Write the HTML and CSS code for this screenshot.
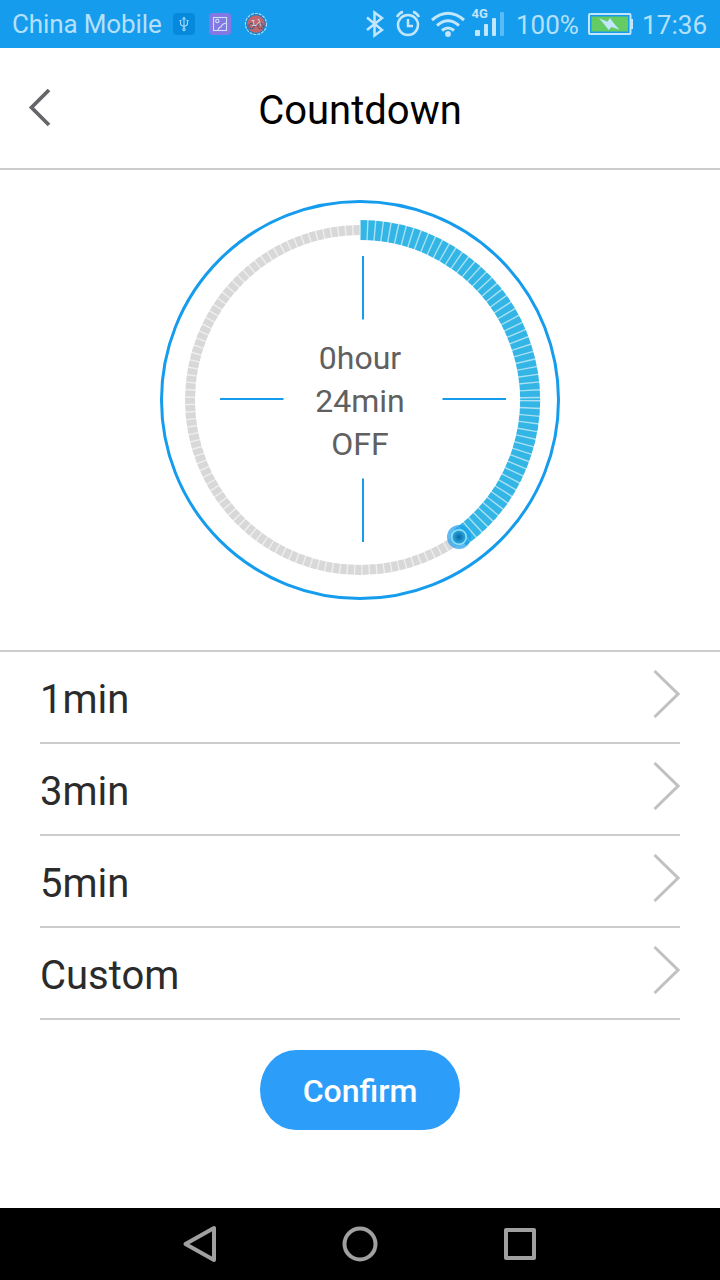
FILE: index.html
```html
<!DOCTYPE html>
<html lang="en">

<head>
    <meta charset="utf-8">
    <title>Countdown</title>
    <link rel="stylesheet" href="styles.css">
</head>

<body class="body">
    <div class="statusBar">
        <span class="carrier">China Mobile</span>
        <svg class="appIcons" width="96" height="24" viewBox="0 0 96 24">
            <!-- usb -->
            <rect x="1" y="1" width="22" height="22" rx="4" fill="#0589dd" />
            <g fill="none" stroke="#a5dafa" stroke-width="1.1">
                <path d="M12 6v11M8.500 8v3.500q0 2 3.500 3q3.500-1 3.500-3V8" />
                <circle cx="12" cy="17.500" r="1.100" />
                <path d="M10.500 7.500L12 5.500l1.500 2M7.500 8.500h2M14.500 8.500h2" />
            </g>
            <!-- picture -->
            <rect x="37" y="1" width="22" height="22" rx="4" fill="#8578e4" />
            <g fill="none" stroke="#c9e2fb" stroke-width="1.100">
                <rect x="41.500" y="5.500" width="13" height="13" />
                <circle cx="45.300" cy="9" r="1.700" />
                <path d="M46 18.500q0-3 3-3.500q1-3.500 5.500-4" />
            </g>
            <!-- bike -->
            <circle cx="84" cy="12" r="10.500" fill="#1780c4" stroke="#a5dafa" stroke-width="1.200" stroke-dasharray="3 1" />
            <circle cx="84" cy="12" r="8.700" fill="#c1666c" />
            <g fill="none" stroke="#285b82" stroke-width="1.100" stroke-dasharray="1.500 .7">
                <circle cx="79.500" cy="14" r="2.700" />
                <circle cx="88.500" cy="14" r="2.700" />
            </g>
            <path d="M80 13.500h4l3-3.500M82 13l-1-4.500M79.500 8.500h3M85.500 7.500h1.500l1.500 6" fill="none" stroke="#bbdcf0" stroke-width=".9" />
        </svg>
        <svg class="radioIcons" width="140" height="36" viewBox="365 6 140 36">
            <!-- bluetooth -->
            <path d="M367 17.500l15 12.500l-7.500 5.500V12.500L382 18l-15 12" fill="none" stroke="#c2e6fc" stroke-width="2.500" />
            <!-- alarm -->
            <g fill="none" stroke="#c2e6fc" stroke-width="2.500">
                <circle cx="408" cy="25" r="10" />
                <path d="M408 19v7h5" />
                <path d="M397 17q2-4 6-5.200M419 17q-2-4-6-5.200" />
            </g>
            <!-- wifi -->
            <g fill="none" stroke="#c2e6fc" stroke-width="3">
                <path d="M432 20q16-13.500 32 0" />
                <path d="M437 25.500q11-9.500 22 0" />
                <path d="M442 30.500q6-5 12 0" />
            </g>
            <circle cx="448" cy="34" r="2.900" fill="#c2e6fc" />
            <!-- signal -->
            <g fill="#c2e6fc">
                <rect x="475" y="30" width="5" height="6" rx="1" />
                <rect x="484" y="24" width="4" height="12" rx="1" />
                <rect x="492" y="18" width="4" height="18" rx="1" />
                <rect x="500" y="12" width="4" height="24" rx="1" fill="#5bbcf5" />
            </g>
            <text class="network" x="471.500" y="18">4G</text>
        </svg>
        <span class="percent">100%</span>
        <svg class="battery" width="46" height="24" viewBox="0 0 46 24">
            <rect x="1" y="2" width="41.500" height="20" rx="1" fill="#169ced" stroke="#c2e6fc" stroke-width="2" />
            <rect x="3" y="4" width="37.500" height="16" fill="#65cb63" stroke="#169ced" stroke-width="1" />
            <path d="M43 7h2v10h-2z" fill="#c2e6fc" />
            <path d="M11 6.300L19.500 9.800L22 6L26 11.500L31.500 17.800L23.500 15L20.600 18L16 12z" fill="#c2e6fc" />
        </svg>
        <span class="clock">17:36</span>
    </div>

    <div class="header">
        <svg class="back" width="24" height="40" viewBox="0 0 24 40">
            <path d="M21 3L3.500 20.500L21 38" fill="none" stroke="#646669" stroke-width="3.800" />
        </svg>
        <div class="title">Countdown</div>
    </div>

    <div class="dialDiv">
        <div class="dial">
            <svg class="dialFace" width="400" height="400" viewBox="0 0 400 400">
                <defs>
                    <radialGradient id="knob">
                        <stop offset="0" stop-color="#0568ab" />
                        <stop offset="1" stop-color="#35addf" />
                    </radialGradient>
                </defs>
                <g fill="none">
                    <circle cx="200" cy="200" r="198.500" stroke="#169ced" stroke-width="3" />
                    <circle cx="200" cy="200" r="170" stroke="#d8d8d8" stroke-width="10" />
                    <!-- 24 of 60 minutes -->
                    <path d="M200 30A170 170 0 0 1 299.920 337.530" stroke="#33b5e5" stroke-width="20" />
                    <!-- gaps between the segments -->
                    <circle cx="200" cy="200" r="170" stroke="#ffffff" stroke-opacity=".58" stroke-width="22" stroke-dasharray="1.400 5.942" />
                    <path d="M203 56v63.500M203 278.500v63.500M60 199h63.500M282.500 199h63.500" stroke="#169ced" stroke-width="2" />
                </g>
                <circle cx="299" cy="337" r="12" fill="#1b9cec" fill-opacity=".7" />
                <circle cx="299" cy="337" r="7.300" fill="url(#knob)" stroke="#8de4f8" stroke-width="1.500" />
            </svg>
            <div class="dialText">
                <div>0hour</div>
                <div>24min</div>
                <div>OFF</div>
            </div>
        </div>
    </div>

    <div class="list">
        <div class="row">
            <span>1min</span>
            <svg class="arrow" width="28" height="50" viewBox="0 0 28 50"><path d="M2.500 2L26 25L2.500 48" /></svg>
        </div>
        <div class="row">
            <span>3min</span>
            <svg class="arrow" width="28" height="50" viewBox="0 0 28 50"><path d="M2.500 2L26 25L2.500 48" /></svg>
        </div>
        <div class="row">
            <span>5min</span>
            <svg class="arrow" width="28" height="50" viewBox="0 0 28 50"><path d="M2.500 2L26 25L2.500 48" /></svg>
        </div>
        <div class="row">
            <span>Custom</span>
            <svg class="arrow" width="28" height="50" viewBox="0 0 28 50"><path d="M2.500 2L26 25L2.500 48" /></svg>
        </div>
    </div>

    <button class="confirmButton">Confirm</button>

    <div class="navBar">
        <svg width="36" height="40" viewBox="0 0 36 40">
            <path d="M32 4v32L3.500 20z" />
        </svg>
        <svg width="36" height="40" viewBox="0 0 36 40">
            <circle cx="18" cy="20" r="15.500" />
        </svg>
        <svg width="36" height="40" viewBox="0 0 36 40">
            <rect x="4" y="6" width="28" height="28" />
        </svg>
    </div>
</body>

</html>
```

FILE: styles.css
```css
.body {
    display: flex;
    flex-direction: column;
    height: 1280px;
    margin: 0;
    background-color: #ffffff;
    font-family: Roboto, sans-serif;
}

.statusBar {
    display: flex;
    align-items: center;
    box-sizing: border-box;
    height: 48px;
    padding-left: 12px;
    padding-right: 12px;
    background-color: #169ced;
    color: #b5e0fb;
    font-size: 26px;
    white-space: nowrap;
}

.carrier {
    width: 160px;
    letter-spacing: -0.12px;
}

.radioIcons {
    margin-left: auto;
}

.network {
    fill: #c2e6fc;
    font-size: 13px;
    font-weight: bold;
}

.percent {
    width: 64px;
    margin-left: 11px;
    padding-top: 2px;
}

.battery {
    margin-left: 8px;
}

.clock {
    width: 66px;
    margin-left: 8px;
    padding-top: 2px;
    letter-spacing: 0.1px;
}

.header {
    display: grid;
    grid-template-columns: 60px 1fr 60px;
    align-items: center;
    box-sizing: border-box;
    height: 122px;
    border-bottom: 2px solid #cccccc;
}

.back {
    margin-left: 28px;
    margin-bottom: 2px;
}

.title {
    padding-top: 4px;
    text-align: center;
    font-size: 40px;
    color: #000000;
}

.dialDiv {
    box-sizing: border-box;
    height: 482px;
    padding-top: 30px;
    border-bottom: 2px solid #cccccc;
}

.dial {
    display: grid;
    width: 400px;
    height: 400px;
    margin: 0 auto;
}

.dialFace,
.dialText {
    grid-area: 1 / 1;
}

.dialText {
    align-self: center;
    padding-top: 3px;
    text-align: center;
    font-size: 32px;
    line-height: 43px;
    color: #606060;
}

.list {
    padding: 0 40px;
}

.row {
    display: flex;
    justify-content: space-between;
    align-items: center;
    box-sizing: border-box;
    height: 92px;
    padding-top: 4px;
    border-bottom: 2px solid #cccccc;
    font-size: 40px;
    color: #2b2b2b;
}

.arrow {
    margin-bottom: 11px;
    fill: none;
    stroke: #c0c1c2;
    stroke-width: 3;
}

.confirmButton {
    width: 200px;
    height: 80px;
    margin: 30px auto 0;
    padding: 2px 0 0;
    border: none;
    border-radius: 36px / 40px;
    background-color: #2d9dfa;
    color: #ffffff;
    font-family: Roboto, sans-serif;
    font-size: 32px;
    font-weight: 500;
}

.navBar {
    display: flex;
    justify-content: center;
    align-items: center;
    gap: 124px;
    height: 72px;
    margin-top: auto;
    background-color: #000000;
    fill: none;
    stroke: #a0a0a0;
    stroke-width: 4;
    stroke-linejoin: round;
}
```
